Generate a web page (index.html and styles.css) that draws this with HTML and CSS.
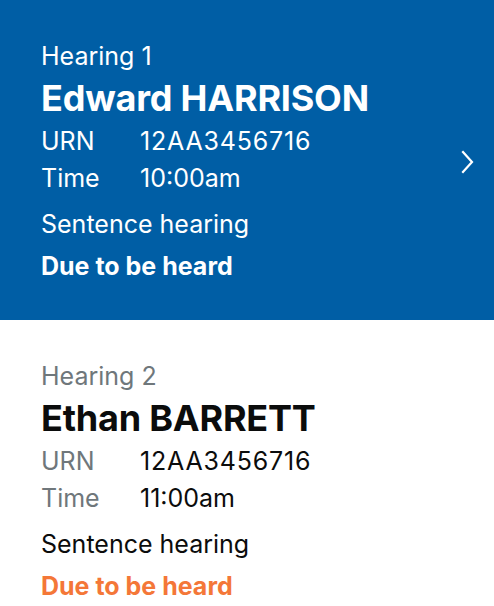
FILE: index.html
```html
<!DOCTYPE html>
<html lang="en">
<head>
<meta charset="utf-8">
<title>Hearings</title>
<link rel="stylesheet" href="styles.css">
</head>
<body>
<ul class="hearings">
  <li class="card card--selected">
    <div class="card__body">
      <p class="card__label">Hearing 1</p>
      <h2 class="card__name">Edward HARRISON</h2>
      <dl class="card__meta">
        <dt>URN</dt><dd class="card__urn">12AA3456716</dd>
        <dt>Time</dt><dd>10:00am</dd>
      </dl>
      <p class="card__type">Sentence hearing</p>
      <p class="card__status">Due to be heard</p>
    </div>
    <svg class="card__chevron" width="14" height="24" viewBox="0 0 14 24" aria-hidden="true">
      <path d="M3 2 L12 12 L3 22" fill="none" stroke="currentColor" stroke-width="2.2" stroke-linecap="square"/>
    </svg>
  </li>
  <li class="card">
    <div class="card__body">
      <p class="card__label">Hearing 2</p>
      <h2 class="card__name">Ethan BARRETT</h2>
      <dl class="card__meta">
        <dt>URN</dt><dd class="card__urn">12AA3456716</dd>
        <dt>Time</dt><dd>11:00am</dd>
      </dl>
      <p class="card__type">Sentence hearing</p>
      <p class="card__status card__status--due">Due to be heard</p>
    </div>
  </li>
</ul>
</body>
</html>
```
FILE: styles.css
```css
html, body {
  margin: 0;
  padding: 0;
  background: #ffffff;
}
body {
  font-family: Inter, "Noto Sans", Arial, sans-serif;
  color: #0b0c0c;
  font-size: 25px;
}
.hearings {
  list-style: none;
  margin: 0;
  padding: 0;
}
.card {
  height: 320px;
  box-sizing: border-box;
  padding: 0 0 0 41px;
  display: flex;
  justify-content: space-between;
  overflow: hidden;
}
.card--selected {
  background: #005ea5;
  color: #ffffff;
}
.card__body {
  display: flex;
  flex-direction: column;
  padding-top: 38px;
}
.card__label {
  margin: 0;
  line-height: 36px;
  color: #6f777b;
}
.card--selected .card__label,
.card--selected .card__meta dt {
  color: #ffffff;
}
.card__name {
  margin: 0;
  font-size: 36px;
  font-weight: 700;
  line-height: 49px;
  letter-spacing: -0.2px;
}
.card__meta {
  margin: 0;
  display: grid;
  grid-template-columns: 99px auto;
  line-height: 37px;
}
.card__meta dt {
  color: #6f777b;
}
.card__meta dd {
  margin: 0;
}
.card__urn {
  letter-spacing: 0.8px;
}
.card__type {
  margin: 9px 0 0;
  line-height: 37px;
}
.card__status {
  margin: 5px 0 0;
  font-weight: 700;
  line-height: 37px;
}
.card__status--due {
  color: #f47738;
}
.card__chevron {
  align-self: center;
  margin: 3px 20px 0 0;
  color: #ffffff;
}
```
